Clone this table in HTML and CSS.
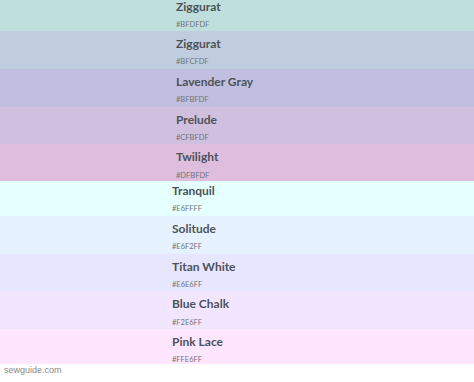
FILE: index.html
```html
<!DOCTYPE html>
<html>
<head>
<meta charset="utf-8">
<link rel="stylesheet" href="styles.css">
</head>
<body>
<div class="page">
  <div class="group group-dark">
    <div class="row" style="background:#bfdfdd"><div class="name">Ziggurat</div><div class="hex">#BFDFDF</div></div>
    <div class="row" style="background:#bfcddf"><div class="name">Ziggurat</div><div class="hex">#BFCFDF</div></div>
    <div class="row" style="background:#c0bfdf"><div class="name">Lavender Gray</div><div class="hex">#BFBFDF</div></div>
    <div class="row" style="background:#d0bfdf"><div class="name">Prelude</div><div class="hex">#CFBFDF</div></div>
    <div class="row cut-bottom" style="background:#dfbddd"><div class="name">Twilight</div><div class="hex">#DFBFDF</div></div>
  </div>
  <div class="group group-light">
    <div class="row cut-top" style="background:#e6ffff"><div class="name">Tranquil</div><div class="hex">#E6FFFF</div></div>
    <div class="row" style="background:#e6f2ff"><div class="name">Solitude</div><div class="hex">#E6F2FF</div></div>
    <div class="row" style="background:#e6e6ff"><div class="name">Titan White</div><div class="hex">#E6E6FF</div></div>
    <div class="row" style="background:#f2e6ff"><div class="name">Blue Chalk</div><div class="hex">#F2E6FF</div></div>
    <div class="row cut-end" style="background:#ffe6ff"><div class="name">Pink Lace</div><div class="hex">#FFE6FF</div></div>
  </div>
  <div class="footer">sewguide.com</div>
</div>
</body>
</html>
```
FILE: styles.css
```css
html, body {
  margin: 0;
  padding: 0;
  background: #ffffff;
  overflow: hidden;
}
.page {
  width: 474px;
  height: 382px;
  overflow: hidden;
  font-family: "Lato", "Open Sans", sans-serif;
}
.group {
  display: flex;
  flex-direction: column;
}
.group-dark {
  margin-top: -6.5px;
}
.row {
  box-sizing: border-box;
  height: 37.7px;
  padding-top: 6px;
  flex: none;
}
.group-dark .row {
  padding-left: 176px;
}
.group-light .row {
  padding-left: 172px;
}
.row.cut-bottom {
  height: 36.7px;
}
.row.cut-top {
  height: 35px;
  padding-top: 3px;
}
.row.cut-end {
  height: 34.9px;
}
.name {
  font-size: 12px;
  font-weight: 700;
  line-height: 14px;
  color: #4d5258;
}
.hex {
  margin-top: 6.3px;
  font-size: 7.5px;
  line-height: 9px;
  color: #70757b;
}
.footer {
  padding: 1.6px 0 0 4px;
  font-size: 9px;
  line-height: 11px;
  color: #8a8a8a;
  font-family: "Liberation Sans", Arial, sans-serif;
}
```
